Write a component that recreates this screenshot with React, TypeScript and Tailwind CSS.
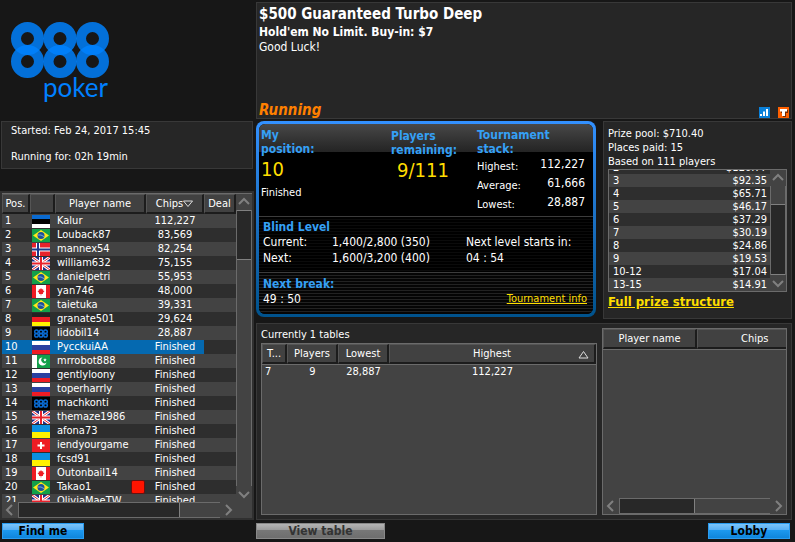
import clsx from "clsx"
import type { ReactNode } from "react"

type Player = { name: string; flag: string; chips: string; marked?: boolean }

const players: Player[] = [
    { name: "Kalur", flag: "ee", chips: "112,227" },
    { name: "Louback87", flag: "br", chips: "83,569" },
    { name: "mannex54", flag: "no", chips: "82,254" },
    { name: "william632", flag: "gb", chips: "75,155" },
    { name: "danielpetri", flag: "br", chips: "55,953" },
    { name: "yan746", flag: "ca", chips: "48,000" },
    { name: "taietuka", flag: "br", chips: "39,331" },
    { name: "granate501", flag: "de", chips: "29,624" },
    { name: "lidobil14", flag: "888", chips: "28,887" },
    { name: "PycckuiAA", flag: "ru", chips: "Finished" },
    { name: "mrrobot888", flag: "pk", chips: "Finished" },
    { name: "gentlyloony", flag: "ru", chips: "Finished" },
    { name: "toperharrly", flag: "ru", chips: "Finished" },
    { name: "machkonti", flag: "888", chips: "Finished" },
    { name: "themaze1986", flag: "gb", chips: "Finished" },
    { name: "afona73", flag: "ua", chips: "Finished" },
    { name: "iendyourgame", flag: "ch", chips: "Finished" },
    { name: "fcsd91", flag: "ua", chips: "Finished" },
    { name: "Outonbail14", flag: "ca", chips: "Finished" },
    { name: "Takao1", flag: "br", chips: "Finished", marked: true },
    { name: "OliviaMaeTW", flag: "gb", chips: "Finished" },
]

const prizes = [
    ["2", "$120.77"],
    ["3", "$92.35"],
    ["4", "$65.71"],
    ["5", "$46.17"],
    ["6", "$37.29"],
    ["7", "$30.19"],
    ["8", "$24.86"],
    ["9", "$19.53"],
    ["10-12", "$17.04"],
    ["13-15", "$14.91"],
]

const flags: Record<string, ReactNode> = {
    ee: <><path fill="#0a6ad0" d="M0 0h18v4H0z" /><path fill="#000" d="M0 4h18v5H0z" /><path fill="#fff" d="M0 9h18v4H0z" /></>,
    br: <><path fill="#12a04a" d="M0 0h18v13H0z" /><path fill="#ffe81a" d="M9 1l8 5.5-8 5.5-8-5.5z" /><circle cx="9" cy="6.5" r="3.5" fill="#1d4f9c" /><path stroke="#8fc0d8" strokeWidth=".8" fill="none" d="M6 6q3-.8 6 1.6" /></>,
    no: <><path fill="#e8222c" d="M0 0h18v13H0z" /><path fill="#fff" d="M4 0h4v13H4zM0 4.500h18v4H0z" /><path fill="#1c3a8c" d="M5 0h2v13H5zM0 5.500h18v2H0z" /></>,
    gb: <><path fill="#1d2f8a" d="M0 0h18v13H0z" /><path stroke="#fff" strokeWidth="3" d="M0 0l18 13M18 0L0 13" /><path stroke="#e8222c" strokeWidth="1" d="M0 0l18 13M18 0L0 13" /><path fill="#fff" d="M7 0h4v13H7zM0 4.500h18v4H0z" /><path fill="#e8222c" d="M8 0h2v13H8zM0 5.500h18v2H0z" /></>,
    ca: <><path fill="#fff" d="M0 0h18v13H0z" /><path fill="#ee1c24" d="M0 0h4v13H0zM14 0h4v13h-4zM9 3l1 1.500 1.200-.4-.2 1.400 1.500.5-1.600 2 .1 1H9.300v1.500h-.6V9H7l.1-1-1.600-2L7 5.500l-.2-1.400 1.200.4z" /></>,
    de: <><path fill="#222" d="M0 0h18v4H0z" /><path fill="#ee1c24" d="M0 4h18v5H0z" /><path fill="#fff200" d="M0 9h18v4H0z" /></>,
    ru: <><path fill="#fff" d="M0 0h18v4H0z" /><path fill="#2a40a0" d="M0 4h18v5H0z" /><path fill="#ee1c24" d="M0 9h18v4H0z" /></>,
    ua: <><path fill="#0b8fe0" d="M0 0h18v7H0z" /><path fill="#fff200" d="M0 7h18v6H0z" /></>,
    ch: <><path fill="#ee1c24" d="M0 0h18v13H0z" /><path fill="#fff" d="M8 3h2v7H8zM5.500 5.500h7v2h-7z" /></>,
    pk: <><path fill="#12a04a" d="M0 0h18v13H0z" /><path fill="#fff" d="M0 0h5v13H0zM10.500 2.500a4 4 0 1 0 4 5 3.200 3.200 0 1 1-4-5zM13 3l.5 1.200 1.200.2-.9.8.2 1.200-1-.6-1.100.6.200-1.200-.9-.8 1.300-.2z" /></>,
    "888": (
        <>
            <path fill="#000" d="M0 0h18v13H0z" />
            <g fill="none" stroke="#0a6ad0" strokeWidth="1.500">
                <circle cx="4.500" cy="4.700" r="1.800" /><circle cx="9" cy="4.700" r="1.800" /><circle cx="13.500" cy="4.700" r="1.800" />
                <circle cx="4.500" cy="8.300" r="1.800" /><circle cx="9" cy="8.300" r="1.800" /><circle cx="13.500" cy="8.300" r="1.800" />
            </g>
        </>
    ),
}

const Flag = ({ code }: { code: string }) => (
    <svg width="18" height="13" viewBox="0 0 18 13" className="block">
        {flags[code]}
    </svg>
)

const Logo = () => (
    <svg width="112" height="92" viewBox="0 0 112 92" role="img" aria-label="888 poker">
        <g fill="none" stroke="#0082ff" strokeOpacity=".84" strokeWidth="10">
            {[17.500, 50, 82.500].map((x) => (
                <g key={x}>
                    <circle cx={x} cy="16.500" r="11.500" />
                    <circle cx={x} cy="39.500" r="11.500" />
                </g>
            ))}
        </g>
        <text x="33" y="75" fill="#0080ff" className="font-[Lato,sans-serif] text-[26px]">poker</text>
    </svg>
)

const arrows = {
    up: "M1 8l5-5 5 5",
    down: "M1 4l5 5 5-5",
    left: "M8 1L3 6l5 5",
    right: "M4 1l5 5-5 5",
}

const ScrollArrow = ({ dir }: { dir: keyof typeof arrows }) => (
    <button type="button" aria-label={`Scroll ${dir}`} className="flex size-4 shrink-0 items-center justify-center">
        <svg width="12" height="12" viewBox="0 0 12 12" fill="none" stroke="#808080" strokeWidth="2">
            <path d={arrows[dir]} />
        </svg>
    </button>
)

const VScroll = ({ children }: { children: ReactNode }) => (
    <div className="flex w-4 shrink-0 flex-col bg-[#434343]">
        <ScrollArrow dir="up" />
        <div className="flex min-h-0 flex-1 flex-col border-x border-[#6b6b6b]">{children}</div>
        <ScrollArrow dir="down" />
    </div>
)

const HScroll = ({ thumb }: { thumb: string }) => (
    <div className="flex h-4 shrink-0 bg-[#434343]">
        <ScrollArrow dir="left" />
        <div className="flex flex-1 border-y border-l border-[#6b6b6b]">
            <div className={clsx("border-r border-[#808080] bg-[#282828]", thumb)} />
        </div>
        <ScrollArrow dir="right" />
    </div>
)

const Th = ({ children }: { children?: ReactNode }) => (
    <th className="h-5 overflow-hidden border-t border-r-2 border-b-2 border-l border-t-[#555] border-r-[#1c1c1c] border-b-[#1c1c1c] border-l-[#555] bg-[#414141] p-0 pt-[1px] text-center leading-[14px] font-normal whitespace-nowrap">
        {children}
    </th>
)

const Sidebar = () => (
    <aside className="flex w-[254px] shrink-0 flex-col">
        <div className="h-[121px] shrink-0 pt-[22px] pl-[10px]">
            <Logo />
        </div>
        <div className="mr-[1px] ml-[1px] flex flex-col gap-3 border border-[#383838] bg-[#262626] px-[9px] pt-[2px] pb-1 leading-[14px]">
            <p>Started: Feb 24, 2017 15:45</p>
            <p>Running for: 02h 19min</p>
        </div>
        <section className="mt-[22px] flex min-h-0 flex-1 flex-col border-2 border-[#303030] bg-[#434343]">
            <div className="flex min-h-0 flex-1 border-t border-[#6b6b6b]">
                <div className="min-w-0 flex-1 overflow-hidden">
                    <table className="w-full table-fixed border-separate border-spacing-0">
                        <colgroup>
                            <col className="w-[28px]" />
                            <col className="w-[25px]" />
                            <col />
                            <col className="w-[58px]" />
                            <col className="w-[32px]" />
                        </colgroup>
                        <thead>
                            <tr>
                                <Th>Pos.</Th>
                                <Th />
                                <Th>Player name</Th>
                                <Th>
                                    <span className="flex items-center justify-center">
                                        Chips
                                        <svg width="10" height="8" viewBox="0 0 10 8" fill="none" stroke="#ddd">
                                            <path d="M.5 1h9L5 6.500z" />
                                        </svg>
                                    </span>
                                </Th>
                                <Th>Deal</Th>
                            </tr>
                        </thead>
                        <tbody>
                            {players.map((p, i) => {
                                const bg = i === 9 ? "bg-[#0569b0]" : ""
                                return (
                                    <tr key={p.name} className="h-[14px] leading-[14px] odd:bg-[#434343] even:bg-[#2e2e2e]">
                                        <td className={clsx("p-0 pl-[3px]", bg)}>{i + 1}</td>
                                        <td className={clsx("p-0 pt-[1px] pl-[2px]", bg)}><Flag code={p.flag} /></td>
                                        <td className={clsx("p-0 pl-[2px]", bg)}>
                                            <div className="flex justify-between">
                                                {p.name}
                                                {p.marked && <span className="mr-[1px] size-[14px] rounded-xs border border-[#661010] bg-[#ff1400]" />}
                                            </div>
                                        </td>
                                        <td className={clsx("p-0 text-center", bg)}>{p.chips}</td>
                                        <td className="p-0" />
                                    </tr>
                                )
                            })}
                        </tbody>
                    </table>
                </div>
                <VScroll>
                    <div className="h-[50px] border-y border-[#808080] bg-[#282828]" />
                </VScroll>
            </div>
            <div className="pr-4">
                <HScroll thumb="w-4/5" />
            </div>
        </section>
    </aside>
)

const Title = ({ children }: { children: ReactNode }) => (
    <h2 className="text-[12px] leading-[14px] font-bold text-[#35a0f5]">{children}</h2>
)

const Stack = ({ label, value }: { label: string; value: string }) => (
    <div className="flex h-[19px] justify-between">
        <dt className="pt-[3px]">{label}</dt>
        <dd className="text-[12px]">{value}</dd>
    </div>
)

const StatusBox = () => (
    <section className="mb-[2px] flex min-w-0 flex-1 rounded-lg bg-linear-to-b from-[#3391ff] to-[#00528c] p-[3px]">
        <div className="flex flex-1 flex-col overflow-hidden rounded-md bg-black">
            <div className="flex h-[93px] border-b border-[#3c3c3c] bg-linear-to-b from-[#484848] to-[#242424] bg-size-[100%_28px] bg-no-repeat pr-2 pl-[2px]">
                <div className="w-[130px] pt-1">
                    <Title>My<br />position:</Title>
                    <p className="mt-[1px] text-[20px] leading-6 text-[#ffde00]">10</p>
                    <p className="mt-[5px] leading-[14px]">Finished</p>
                </div>
                <div className="w-[86px] pt-[5px]">
                    <Title>Players<br />remaining:</Title>
                    <p className="mt-[1px] pl-[6px] text-[20px] leading-6 text-[#ffde00]">9/111</p>
                </div>
                <div className="flex-1 pt-1">
                    <Title>Tournament<br />stack:</Title>
                    <dl className="leading-[16px]">
                        <Stack label="Highest:" value="112,227" />
                        <Stack label="Average:" value="61,666" />
                        <Stack label="Lowest:" value="28,887" />
                    </dl>
                </div>
            </div>
            <div className="h-[56px] border-b border-[#3c3c3c] bg-[repeating-linear-gradient(#000_0_2px,#0b0b0b_2px_3px)] pt-[3px] pl-1 text-[12px] leading-4">
                <Title>Blind Level</Title>
                <div className="grid grid-cols-[69px_134px_1fr]">
                    <span>Current:</span>
                    <span>1,400/2,800 (350)</span>
                    <span>Next level starts in:</span>
                    <span>Next:</span>
                    <span>1,600/3,200 (400)</span>
                    <span>04 : 54</span>
                </div>
            </div>
            <div className="flex-1 bg-[repeating-linear-gradient(#050505_0_2px,#222_2px_3px)] pt-1 pr-[6px] pl-1">
                <Title>Next break:</Title>
                <div className="flex justify-between text-[12px] leading-4">
                    <span>49 : 50</span>
                    <a href="#info" className="text-[11px] text-[#ffde00] underline">Tournament info</a>
                </div>
            </div>
        </div>
    </section>
)

const PrizeBox = () => (
    <section className="w-[189px] shrink-0 border border-[#383838] bg-[#262626] pt-[5px] pr-1 pl-1 leading-[14px]">
        <p>Prize pool: $710.40</p>
        <p>Places paid: 15</p>
        <p>Based on 111 players</p>
        <div className="flex h-[123px] border border-[#6b6b6b]">
            <div className="flex flex-1 flex-col justify-end overflow-hidden">
                <table className="w-full border-separate border-spacing-0">
                    <tbody>
                        {prizes.map(([place, prize]) => (
                            <tr key={place} className="h-[13px] leading-[13px] odd:bg-[#2e2e2e] even:bg-[#434343]">
                                <td className="p-0 pl-1">{place}</td>
                                <td className="p-0 pr-[3px] text-right">{prize}</td>
                            </tr>
                        ))}
                    </tbody>
                </table>
            </div>
            <VScroll>
                <div className="h-[18px]" />
                <div className="flex-1 border-y border-[#808080] bg-[#282828]" />
            </VScroll>
        </div>
        <a href="#prizes" className="mt-[2px] block text-[13px] leading-4 font-bold text-[#ffde00] underline">Full prize structure</a>
    </section>
)

const TablesPanel = () => (
    <section className="mt-1 flex min-h-0 flex-1 gap-[5px] border border-[#383838] bg-[#262626] p-1">
        <div className="flex min-w-0 flex-1 flex-col">
            <h2 className="h-[15px] leading-[14px]">Currently 1 tables</h2>
            <div className="flex-1 border border-[#6b6b6b] bg-[#434343]">
                <table className="w-full table-fixed border-separate border-spacing-0">
                    <colgroup>
                        <col className="w-[25px]" />
                        <col className="w-[51px]" />
                        <col className="w-[51px]" />
                        <col />
                    </colgroup>
                    <thead>
                        <tr>
                            <Th>T...</Th>
                            <Th>Players</Th>
                            <Th>Lowest</Th>
                            <Th>
                                <span className="flex items-center">
                                    <span className="flex-1 pl-4">Highest</span>
                                    <svg width="11" height="9" viewBox="0 0 11 9" fill="none" stroke="#ddd" className="mr-[5px]">
                                        <path d="M1 8h9L5.500 1.500z" />
                                    </svg>
                                </span>
                            </Th>
                        </tr>
                    </thead>
                    <tbody>
                        <tr className="text-center leading-[14px]">
                            <td className="border-t border-[#6b6b6b] p-0 pl-[3px] text-left">7</td>
                            <td className="border-t border-[#6b6b6b] p-0">9</td>
                            <td className="border-t border-[#6b6b6b] p-0">28,887</td>
                            <td className="border-t border-[#6b6b6b] p-0">112,227</td>
                        </tr>
                    </tbody>
                </table>
            </div>
        </div>
        <div className="flex w-[185px] shrink-0 flex-col border border-[#6b6b6b] bg-[#434343]">
            <div className="flex-1 overflow-hidden">
                <table className="w-[115%] table-fixed border-separate border-spacing-0 border-b border-[#6b6b6b]">
                    <colgroup>
                        <col className="w-[94px]" />
                        <col />
                    </colgroup>
                    <thead>
                        <tr>
                            <Th>Player name</Th>
                            <Th>Chips</Th>
                        </tr>
                    </thead>
                </table>
            </div>
            <HScroll thumb="w-1/2" />
        </div>
    </section>
)

const blue = "bg-[linear-gradient(#7cc4fa,#58b0f4_40%,#1e9af0_41%,#0f86dc)] border-[#2a9cf0] text-black"
const grey = "bg-[linear-gradient(#b4b4b4,#9c9c9c_40%,#787878_41%,#6e6e6e)] border-[#888] text-[#333]"

const App = () => {
    return (
        <div className="flex h-screen flex-col bg-[#171717] pr-[3px] pb-[3px] font-['DejaVu_Sans_Condensed','DejaVu_Sans',sans-serif] text-[11px] text-white">
            <div className="flex min-h-0 flex-1 gap-[2px]">
                <Sidebar />
                <main className="flex min-w-0 flex-1 flex-col pt-[2px]">
                    <header className="flex h-[117px] shrink-0 flex-col border border-[#383838] bg-[#262626] px-[2px]">
                        <h1 className="pt-[1px] text-[15px] leading-5 font-bold">$500 Guaranteed Turbo Deep</h1>
                        <p className="text-[12px] leading-4 font-bold">Hold'em No Limit. Buy-in: $7</p>
                        <p className="text-[12px] leading-[14px]">Good Luck!</p>
                        <div className="mt-auto flex items-end justify-between">
                            <p className="text-[15px] leading-4 font-bold text-[#ff8000] italic">Running</p>
                            <div className="flex gap-2">
                                <svg width="11" height="11" viewBox="0 0 11 11">
                                    <path fill="#0b80d8" d="M0 0h11v11H0z" />
                                    <path fill="#fff" d="M1 7h2v2H1zM4 4.500h2V9H4zM7 2h2v7H7z" />
                                </svg>
                                <svg width="11" height="11" viewBox="0 0 11 11">
                                    <path fill="#ff6000" d="M0 0h11v11H0z" />
                                    <path fill="#7a2c00" d="M3 3h7v3H8v4H5V6H3z" />
                                    <path fill="#fff" d="M2 2h7v2.500H7V9H4V4.500H2z" />
                                </svg>
                            </div>
                        </div>
                    </header>
                    <div className="mt-[2px] flex h-[198px] shrink-0 gap-[7px]">
                        <StatusBox />
                        <PrizeBox />
                    </div>
                    <TablesPanel />
                </main>
            </div>
            <footer className="mt-[3px] flex gap-[172px] pr-[2px] pl-[2px] text-[12px] leading-4 font-bold">
                <button type="button" className={clsx("h-4 w-[82px] border leading-[14px]", blue)}>Find me</button>
                <button type="button" disabled className={clsx("h-4 w-[129px] border leading-[14px]", grey)}>View table</button>
                <button type="button" className={clsx("ml-auto h-4 w-[82px] border leading-[14px]", blue)}>Lobby</button>
            </footer>
        </div>
    )
}

export default App
